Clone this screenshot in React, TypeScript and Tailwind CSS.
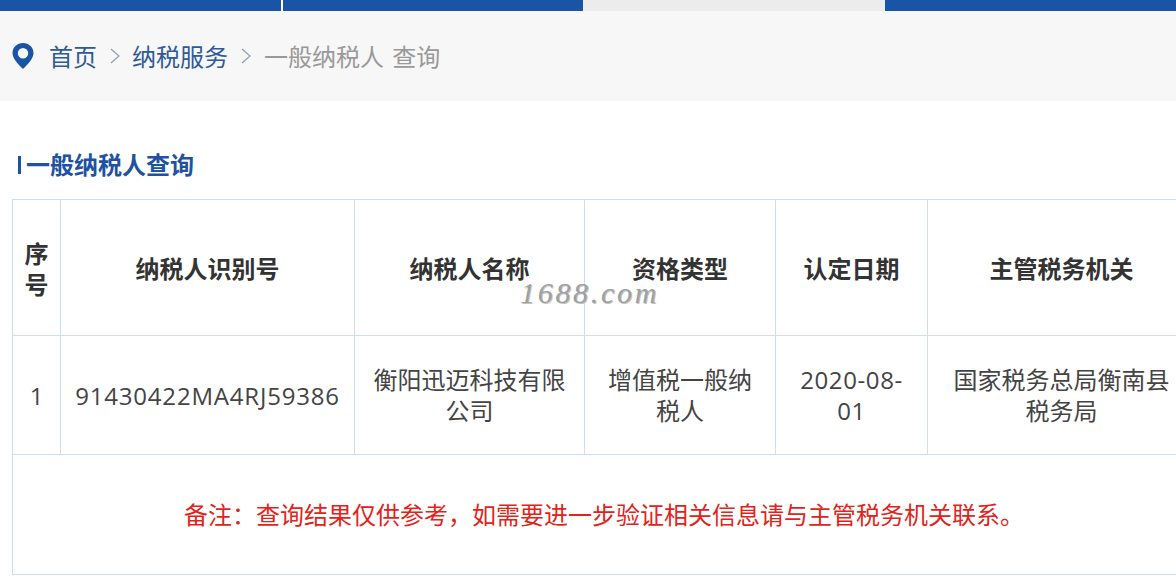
import React from "react";

const sans = "font-['Open_Sans','Noto_Sans_CJK_SC',sans-serif]";
const th = "border border-[#cfdfe9] text-[24px] font-bold text-[#333] text-center align-middle p-0 pt-[2px]";
const td = "border border-[#cfdfe9] text-[24px] leading-[31px] text-[#444] text-center align-middle px-[16px] py-0";

const Chevron = () => (
  <svg width="12" height="20" viewBox="0 0 12 20" fill="none" stroke="#8d9fb8" strokeWidth="1.2" className="shrink-0">
    <path d="M2 3l8 7-8 7" />
  </svg>
);

const App: React.FC = () => {
  return (
    <div className={`${sans} relative h-[582px] w-[1176px] overflow-hidden bg-white`}>
      {/* top nav */}
      <div className="flex h-[11px]">
        <div className="w-[281px] bg-[#1a55a5]" />
        <div className="ml-[2px] w-[300px] bg-[#1a55a5]" />
        <div className="w-[302px] bg-[#ececec]" />
        <div className="flex-1 bg-[#1a55a5]" />
      </div>

      {/* breadcrumb */}
      <div className="flex h-[90px] items-center bg-[#f7f7f7] pl-[12px] text-[24px]">
        <svg width="22" height="28" viewBox="0 0 22 28" className="shrink-0">
          <path
            fillRule="evenodd"
            fill="#1a55a5"
            d="M11 1C5 1 .5 5.400.5 11c0 5.500 5 10.500 10.500 16 5.500-5.500 10.500-10.500 10.500-16C21.500 5.400 17 1 11 1zm0 5a5.200 5.200 0 110 10.400A5.200 5.200 0 0111 6z"
          />
        </svg>
        <span className="ml-[15px] pt-[1px] text-[#2f5a96]">首页</span>
        <span className="ml-[12px] mr-[11px]"><Chevron /></span>
        <span className="pt-[1px] text-[#2f5a96]">纳税服务</span>
        <span className="ml-[12px] mr-[12px]"><Chevron /></span>
        <span className="pt-[1px] text-[#999] [word-spacing:2px]">一般纳税人 查询</span>
      </div>

      {/* title */}
      <div className="flex h-[98px] items-center pl-[18px] pt-[30px]">
        <div className="h-[18px] w-[3px] bg-[#1a55a5]" />
        <h2 className="ml-[5px] text-[24px] font-bold text-[#1f52a0]">一般纳税人查询</h2>
      </div>

      <table className="ml-[12px] w-[1183px] table-fixed border-collapse">
        <colgroup>
          <col className="w-[48px]" />
          <col className="w-[294px]" />
          <col className="w-[230px]" />
          <col className="w-[191px]" />
          <col className="w-[152px]" />
          <col className="w-[268px]" />
        </colgroup>
        <tbody>
          <tr className="h-[136px]">
            <th className={`${th} leading-[31px]`}>序<br />号</th>
            <th className={th}>纳税人识别号</th>
            <th className={th}>纳税人名称</th>
            <th className={th}>资格类型</th>
            <th className={th}>认定日期</th>
            <th className={th}>主管税务机关</th>
          </tr>
          <tr className="h-[119px]">
            <td className={td}>1</td>
            <td className={`${td} whitespace-nowrap !px-0 tracking-[0.8px]`}>91430422MA4RJ59386</td>
            <td className={td}>衡阳迅迈科技有限公司</td>
            <td className={td}>增值税一般纳税人</td>
            <td className={`${td} tracking-[0.6px]`}>2020-08-01</td>
            <td className={`${td} !px-[24px]`}>国家税务总局衡南县税务局</td>
          </tr>
          <tr className="h-[120px]">
            <td colSpan={6} className={`${td} !text-[#e2231a]`}>
              备注：查询结果仅供参考，如需要进一步验证相关信息请与主管税务机关联系。
            </td>
          </tr>
        </tbody>
      </table>

      {/* watermark */}
      <div className="absolute left-[520px] top-[276px] font-['Liberation_Serif',serif] text-[30px] italic leading-[34px] tracking-[2.7px] text-[#a0a0a0] [text-shadow:1px_1px_0_#c4c4c4]">
        1688.com
      </div>
    </div>
  );
};

export default App;
